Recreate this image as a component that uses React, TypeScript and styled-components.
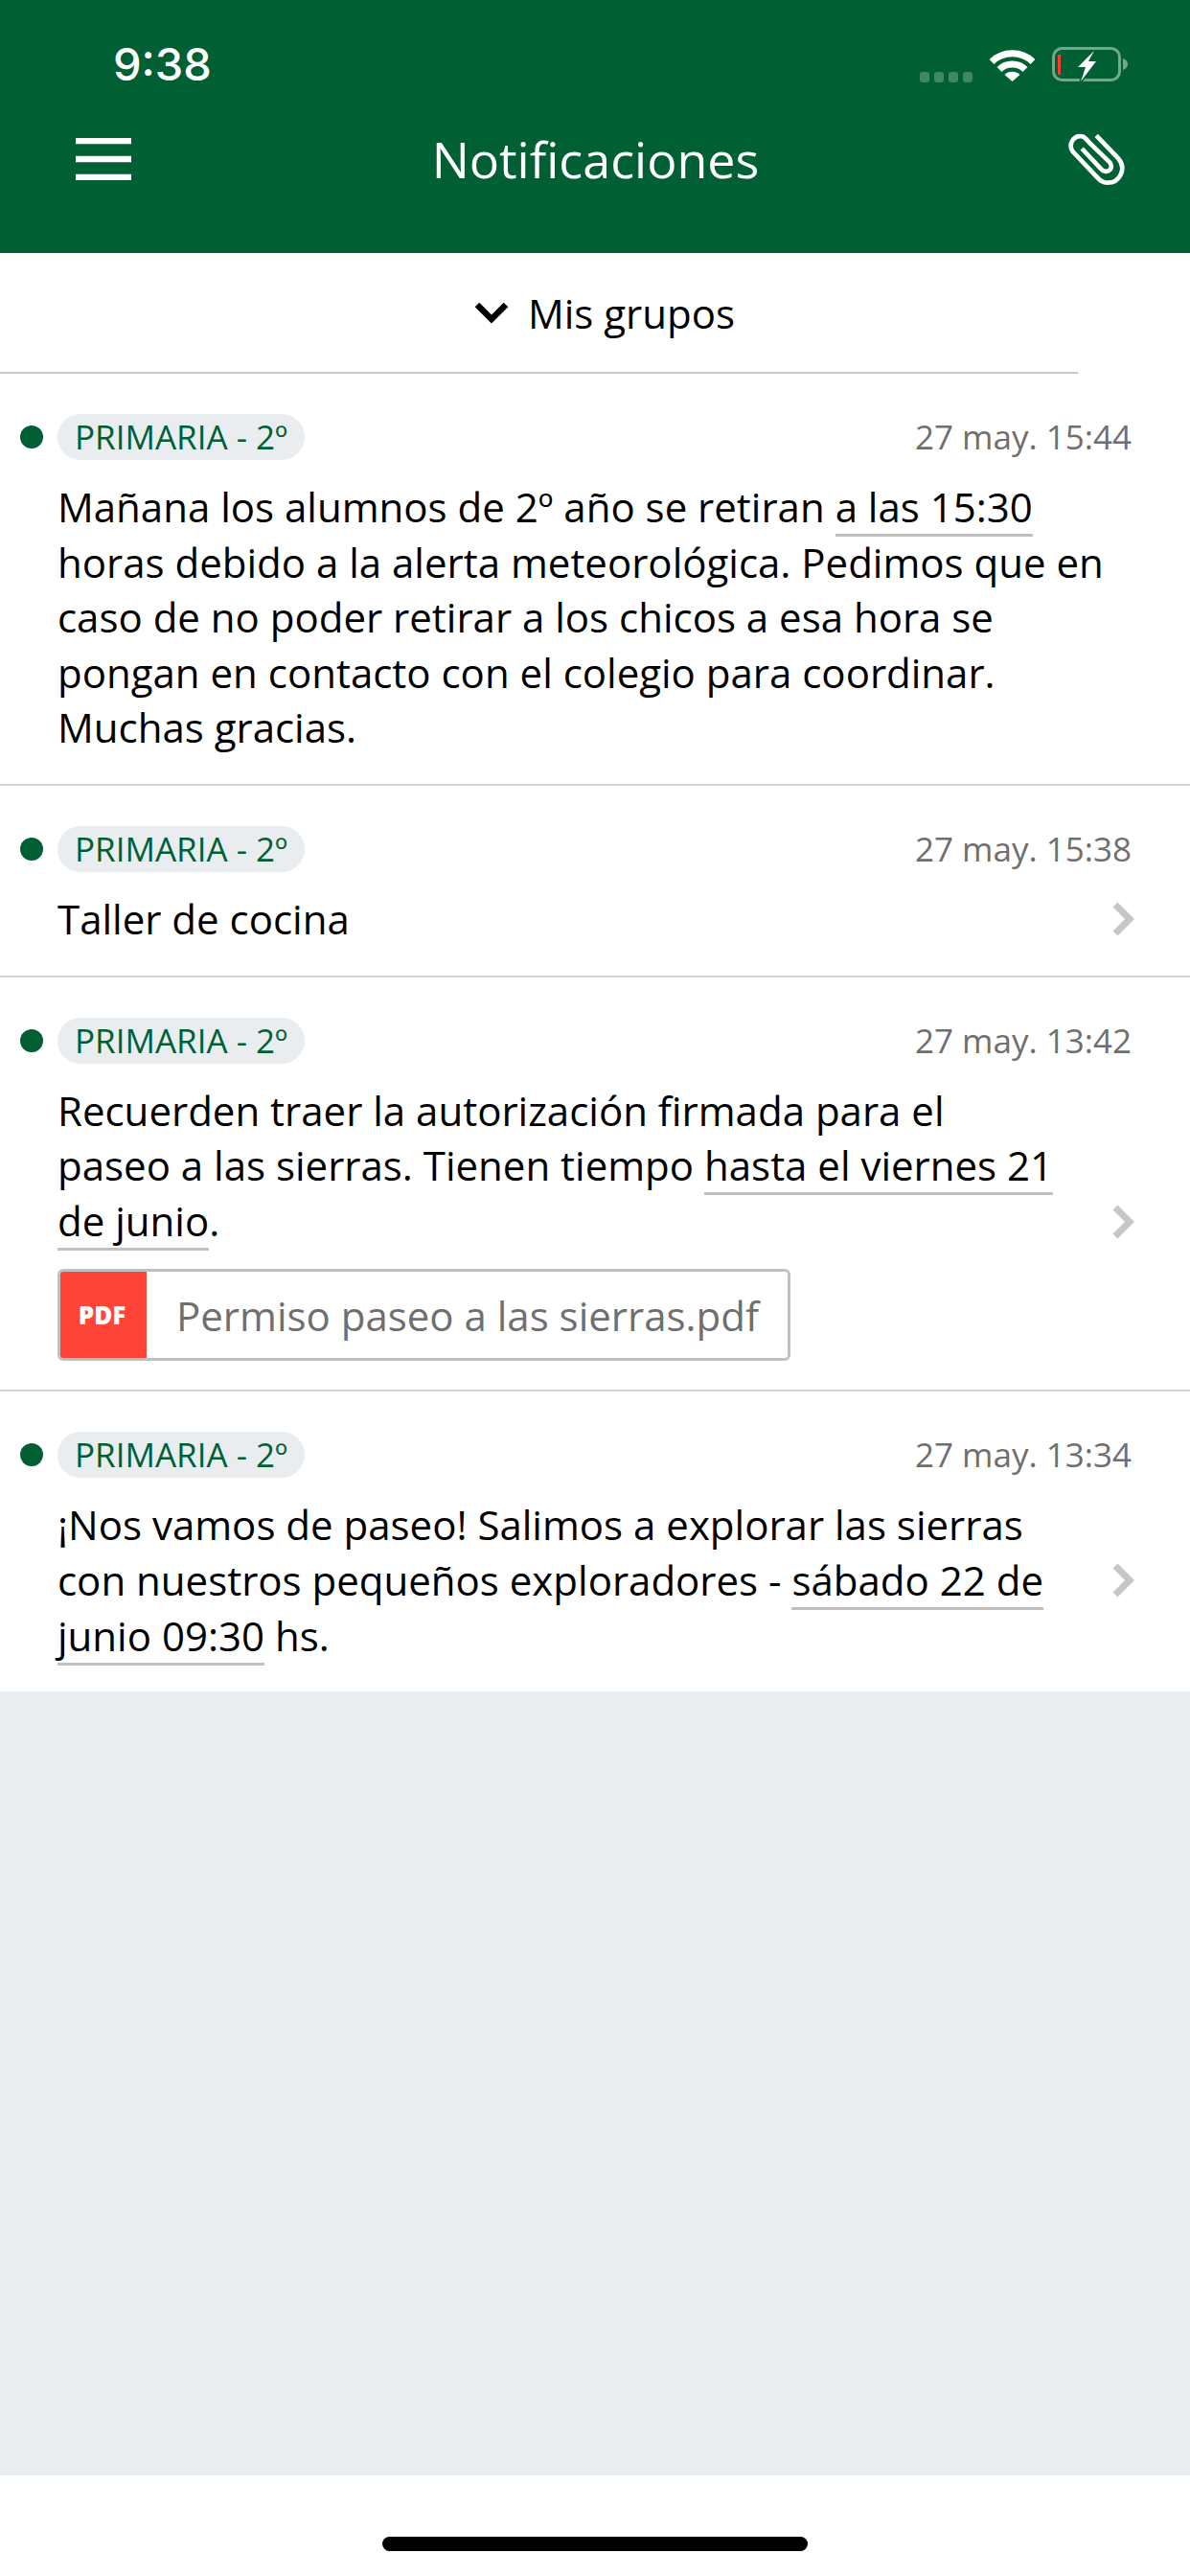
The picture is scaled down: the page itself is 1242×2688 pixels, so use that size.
import React from 'react';
import styled, { createGlobalStyle } from 'styled-components';

const GREEN = '#005f33';

interface INotification {
  id: number;
  group: string;
  date: string;
  body: React.ReactNode;
  hasChevron?: boolean;
  attachment?: string;
}

const App = () => (
  <>
    <GlobalStyle />
    <Page>
      <Header>
        <StatusBar>
          <Clock>9:38</Clock>
          <StatusIcons>
            <SignalDots>
              <i />
              <i />
              <i />
              <i />
            </SignalDots>
            <svg width="49" height="36" viewBox="0 0 49 36">
              <path d="M3 15.5 A31 31 0 0 1 46 15.5" fill="none" stroke="#fff" strokeWidth="7" />
              <path d="M11 23.5 A19.5 19.5 0 0 1 38 23.5" fill="none" stroke="#fff" strokeWidth="7" />
              <path d="M16.5 29 A11.5 11.5 0 0 1 32.5 29 L24.5 36 Z" fill="#fff" />
            </svg>
            <svg width="79" height="36" viewBox="0 0 79 36">
              <rect x="1.5" y="1.5" width="69" height="33" rx="9" fill="none" stroke="#fff" strokeOpacity=".45" strokeWidth="3" />
              <path d="M74 12 C77 13 79 15 79 18 C79 21 77 23 74 24 Z" fill="#fff" fillOpacity=".45" />
              <rect x="6" y="8" width="3" height="21" fill="#ff3b30" />
              <path
                d="M44 4 L27 21 L35 21 L30 36 L46 15 L38 15 Z"
                fill="#fff"
                stroke={GREEN}
                strokeWidth="3"
                paintOrder="stroke"
              />
            </svg>
          </StatusIcons>
        </StatusBar>
        <Toolbar>
          <svg width="58" height="44" viewBox="0 0 58 44">
            <path d="M0 3h58M0 22h58M0 41h58" stroke="#fff" strokeWidth="6.5" />
          </svg>
          <Title>Notificaciones</Title>
          <svg width="62" height="55" viewBox="105 60 185 165">
            <path
              d="M195 67 L265 140 C290 170 270 215 230 215 C212 215 205 205 195 195 L122 118 C105 95 125 65 150 70 C160 72 165 80 172 88 L238 152 C252 175 225 190 208 170 L150 108"
              fill="none"
              stroke="#fff"
              strokeWidth="14"
            />
          </svg>
        </Toolbar>
      </Header>

      <GroupFilter>
        <svg width="36" height="24" viewBox="0 0 36 24">
          <path d="M3 4 L18 19 L33 4" fill="none" stroke="#000" strokeWidth="6.5" />
        </svg>
        <span>Mis grupos</span>
      </GroupFilter>

      <List>
        {notifications.map(({ id, group, date, body, hasChevron, attachment }) => (
          <Row key={id}>
            <RowTop>
              <UnreadDot />
              <GroupChip>{group}</GroupChip>
              <DateLabel>{date}</DateLabel>
            </RowTop>
            <RowBody>
              <Content $narrow={!!hasChevron}>
                <Message>{body}</Message>
                {attachment && (
                  <Attachment>
                    <PdfBadge>PDF</PdfBadge>
                    <FileName>{attachment}</FileName>
                  </Attachment>
                )}
              </Content>
              {hasChevron && (
                <svg width="28" height="38" viewBox="0 0 28 38">
                  <path d="M5 4 L20 19 L5 34" fill="none" stroke="#c4c6c8" strokeWidth="7" />
                </svg>
              )}
            </RowBody>
          </Row>
        ))}
      </List>

      <Spacer />
      <BottomBar>
        <HomeIndicator />
      </BottomBar>
    </Page>
  </>
);

export default App;

const GlobalStyle = createGlobalStyle`
  html, body {
    margin: 0;
    padding: 0;
    background: #fff;
  }
  * {
    box-sizing: border-box;
  }
`;

const Page = styled.div`
  display: flex;
  flex-direction: column;
  width: 1242px;
  height: 2688px;
  overflow: hidden;
  font-family: "Open Sans", "Noto Sans", sans-serif;
  color: #000;
  background: #e9edf0;
`;

const Header = styled.header`
  height: 264px;
  background: ${GREEN};
  color: #fff;
`;

const StatusBar = styled.div`
  display: flex;
  align-items: flex-start;
  justify-content: space-between;
  height: 134px;
  padding: 49px 65px 0 118px;
`;

const Clock = styled.span`
  font-family: Inter, Roboto, sans-serif;
  font-size: 47px;
  font-weight: 500;
  line-height: 36px;
`;

const StatusIcons = styled.div`
  display: flex;
  align-items: flex-start;
  gap: 17px;
`;

const SignalDots = styled.div`
  display: flex;
  gap: 5px;
  margin-top: 26px;

  i {
    width: 10px;
    height: 11px;
    border-radius: 3px;
    background: rgba(255, 255, 255, 0.25);
  }
`;

const Toolbar = styled.div`
  display: flex;
  align-items: center;
  justify-content: space-between;
  padding: 0 66px 0 79px;
`;

const Title = styled.h1`
  margin: 0 0 0 -8px;
  font-size: 52px;
  font-weight: 400;
  line-height: 64px;
`;

const GroupFilter = styled.div`
  display: flex;
  align-items: center;
  justify-content: center;
  gap: 20px;
  height: 126px;
  width: 1125px;
  padding-left: 137px;
  background: #fff;
  font-size: 42px;
  border-bottom: 2px solid #c9c9c9;
  box-shadow: 117px 0 0 #fff;
`;

const List = styled.div`
  display: flex;
  flex-direction: column;
  background: #fff;
`;

const Row = styled.article`
  padding: 42px 0 30px;
  border-bottom: 2px solid #d6d6d6;

  &:last-child {
    border-bottom: none;
  }
`;

const RowTop = styled.div`
  display: flex;
  align-items: center;
  padding: 0 61px 0 21px;
`;

const UnreadDot = styled.span`
  width: 24px;
  height: 24px;
  border-radius: 50%;
  background: ${GREEN};
  margin-right: 15px;
`;

const GroupChip = styled.span`
  display: block;
  padding: 0 18px;
  border-radius: 24px;
  background: #e9edf0;
  color: ${GREEN};
  font-size: 35px;
  line-height: 48px;
`;

const DateLabel = styled.time`
  margin-left: auto;
  color: #6f6f6f;
  font-size: 35px;
  line-height: 48px;
`;

const RowBody = styled.div`
  display: flex;
  align-items: center;
  justify-content: space-between;
  padding: 20px 55px 0 60px;
`;

const Content = styled.div<{ $narrow: boolean }>`
  width: ${({ $narrow }) => ($narrow ? '1040px' : '1110px')};
`;

const Message = styled.p`
  margin: 0;
  font-size: 42px;
  line-height: 57.6px;
`;

const Highlight = styled.span`
  border-bottom: 3px solid #c0c0c0;
`;

const Attachment = styled.div`
  display: flex;
  align-items: stretch;
  width: 765px;
  height: 96px;
  margin-top: 22px;
  border: 3px solid #c0c0c0;
  border-radius: 6px;
  overflow: hidden;
`;

const PdfBadge = styled.span`
  display: flex;
  align-items: center;
  justify-content: center;
  width: 93px;
  margin: -3px 0 -3px -3px;
  background: #ff453a;
  color: #fff;
  font-size: 26px;
  font-weight: 800;
`;

const FileName = styled.span`
  align-self: center;
  padding-left: 31px;
  color: #6f6f6f;
  font-size: 42px;
  white-space: nowrap;
`;

const Spacer = styled.div`
  flex: 1;
`;

const BottomBar = styled.footer`
  display: flex;
  justify-content: center;
  height: 105px;
  padding-top: 64px;
  background: #fff;
`;

const HomeIndicator = styled.div`
  width: 444px;
  height: 15px;
  border-radius: 8px;
  background: #000;
`;

const notifications: INotification[] = [
  {
    id: 1,
    group: 'PRIMARIA - 2º',
    date: '27 may. 15:44',
    body: (
      <>
        Mañana los alumnos de 2º año se retiran <Highlight>a las 15:30</Highlight> horas debido a la alerta
        meteorológica. Pedimos que en caso de no poder retirar a los chicos a esa hora se pongan en contacto con el
        colegio para coordinar. Muchas gracias.
      </>
    ),
  },
  {
    id: 2,
    group: 'PRIMARIA - 2º',
    date: '27 may. 15:38',
    body: 'Taller de cocina',
    hasChevron: true,
  },
  {
    id: 3,
    group: 'PRIMARIA - 2º',
    date: '27 may. 13:42',
    body: (
      <>
        Recuerden traer la autorización firmada para el paseo a las sierras. Tienen tiempo{' '}
        <Highlight>hasta el viernes 21 de junio</Highlight>.
      </>
    ),
    hasChevron: true,
    attachment: 'Permiso paseo a las sierras.pdf',
  },
  {
    id: 4,
    group: 'PRIMARIA - 2º',
    date: '27 may. 13:34',
    body: (
      <>
        ¡Nos vamos de paseo! Salimos a explorar las sierras con nuestros pequeños exploradores -{' '}
        <Highlight>sábado 22 de junio 09:30</Highlight> hs.
      </>
    ),
    hasChevron: true,
  },
];
